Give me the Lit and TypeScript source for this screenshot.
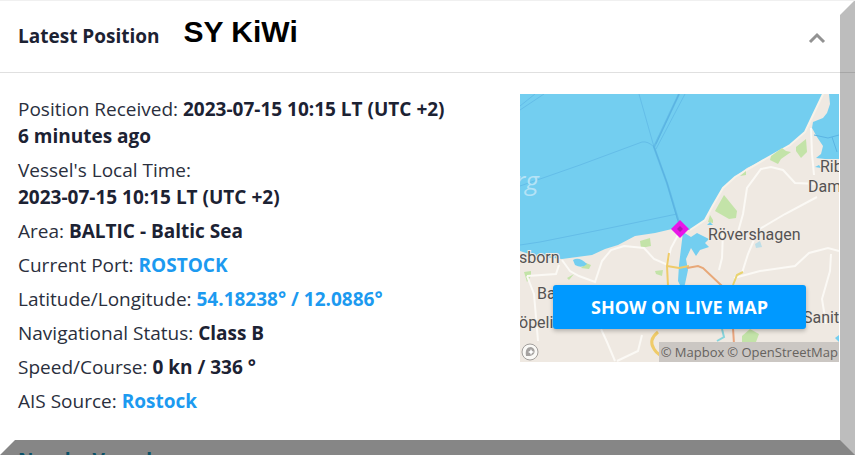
import { LitElement, html, css, nothing } from "lit";
import { customElement } from "lit/decorators.js";

interface Detail {
  label: string;
  value: string;
  link?: boolean;
  below?: boolean;
  note?: string;
}

const details: Detail[] = [
  { label: "Position Received:", value: "2023-07-15 10:15 LT (UTC +2)", note: "6 minutes ago" },
  { label: "Vessel's Local Time:", value: "2023-07-15 10:15 LT (UTC +2)", below: true },
  { label: "Area:", value: "BALTIC - Baltic Sea" },
  { label: "Current Port:", value: "ROSTOCK", link: true },
  { label: "Latitude/Longitude:", value: "54.18238° / 12.0886°", link: true },
  { label: "Navigational Status:", value: "Class B" },
  { label: "Speed/Course:", value: "0 kn / 336 °" },
  { label: "AIS Source:", value: "Rostock", link: true },
];

@customElement("position-map")
class PositionMap extends LitElement {
  static styles = css`
    :host {
      display: block;
      position: relative;
      overflow: hidden;
    }
    .map {
      display: block;
      width: 100%;
    }
    .place {
      font-family: "Roboto", sans-serif;
      font-size: 16px;
      fill: #555353;
      stroke: #f1ebe4;
      stroke-width: 2px;
      paint-order: stroke;
    }
    .sea-name {
      font-family: "Open Sans", sans-serif;
      font-style: italic;
      font-size: 26px;
      fill: #b5e3f6;
    }
    .show {
      position: absolute;
      left: 33px;
      right: 33px;
      bottom: 33px;
      height: 44px;
      padding: 0;
      border: 0;
      border-radius: 3px;
      background: #0099ff;
      color: #fff;
      font: 700 18px "Open Sans", sans-serif;
      box-shadow: 0 2px 4px rgba(0, 0, 0, 0.25);
    }
    .credit {
      position: absolute;
      right: 0;
      bottom: 0;
      display: flex;
      gap: 3px;
      padding: 0 1px 0 2px;
      background: #cbc7c3;
      font: 13px/20px "Open Sans", sans-serif;
      white-space: nowrap;
    }
    .credit a {
      color: #66635f;
      text-decoration: none;
    }
  `;

  render() {
    return html`
      <svg class="map" viewBox="0 0 319 268" role="img" aria-label="Map of the coast near Rostock">
        <rect width="319" height="268" fill="#73cef0" />
        <g fill="none" stroke="#64bde8" stroke-width="1">
          <path d="M0 92 L60 71 L122 48 Q128 47 134 53" />
          <path d="M119 0 L134 53 L147 89 L157 124 L160 132" />
          <path d="M0 12 L15 0 M0 16 L24 0" />
          <path d="M159 0 L136 50 M165 0 L136 55" />
          <path d="M157 120 L80 136 L20 148 L0 151" />
        </g>
        <path d="M159 0 L134 53 L147 89 L160 132" fill="none" stroke="#4fa7dc" stroke-width="2" opacity="0.5" />
        <path
          d="M0 157 L15 162 L42 165 L57 163 L72 161 L85 155 L98 151 L115 142 L135 139 L152 135 L170 136 L185 126 L192 113 L203 94 L215 83 L227 74 L247 64 L270 51 L285 38 L293 21 L299 9 L303 0 L309 0 L310 10 L307 19 L303 24 L293 28 L292 34 L297 43 L303 52 L301 60 L296 64 L305 65 L319 65 V268 H0 Z"
          fill="#efe9e2"
        />
        <path d="M170 136 L185 126 L192 113 L203 94 L215 83 L247 64 L270 51 L285 38 L293 21 L303 0" fill="none" stroke="#f7f2e9" stroke-width="2" />
        <g fill="#c3e3a8">
          <path d="M204 101 L217 117 L216 124 L209 125 L195 117 Z" />
          <path d="M190 121 L193 126 L193 129 L188 128 Z" />
          <path d="M251 62 L262 54 L266 57 L271 58 L261 65 L258 70 L250 66 Z" />
          <path d="M276 53 L286 45 L287 58 L281 64 L276 57 Z" />
          <path d="M220 82 L226 77 L226 81 Z" />
          <path d="M120 147 L130 144 L131 152 L121 154 Z" />
          <path d="M4 178 L11 177 L11 182 L7 188 Z" />
          <path d="M66 169 L71 171 L69 175 L61 174 Z" />
          <path d="M135 177 L143 176 L142 182 L136 180 Z" />
          <path d="M47 184 L54 180 L49 186 Z" />
          <path d="M222 242 L230 235 L239 240 L236 248 H222 Z" />
        </g>
        <g fill="#73cef0">
          <path d="M163 138 L171 143 L177 139 L189 145 L185 149 L189 153 L180 156 L176 162 L171 154 L166 165 L168 176 L165 190 L163 197 L158 187 L159 171 Z" />
          <path d="M53 166 Q59 162 67 170 Q62 175 55 171 Z" />
          <path d="M187 131 L190 128 L193 131 Z M295 73 L299 71 L301 74 Z" />
          <path d="M235 150 L240 147 L242 153 L236 154 Z" opacity="0.4" />
          <path d="M315 244 L319 241 V248 Z" />
        </g>
        <g fill="none" stroke="#fbf9f5" stroke-width="2">
          <path d="M42 166 L50 177 L59 182 L75 188 L82 167 L91 156 L104 152 L124 154 L134 165 L148 171" />
          <path d="M39 171 L36 180 L7 182 M7 182 L14 200 L18 247" />
          <path d="M81 235 L87 248 L95 267 M97 267 L118 257 L122 241" />
          <path d="M218 138 L223 120 L227 94 L241 75 L251 73 L263 76 L275 89 L300 90" />
          <path d="M291 34 L292 60 L294 81" />
          <path d="M297 103 L265 120 L238 136 L228 160 L222 179" />
          <path d="M203 138 L202 164 L199 176" />
          <path d="M214 184 L240 177 L275 172 L289 159 L308 154 L319 157 M311 160 L310 177 L302 205 L306 230" />
          <path d="M147 170 L151 154 L158 141" />
        </g>
        <g fill="none" stroke-width="2">
          <path d="M149 159 L147 172 L148 192 M147 172 L159 174 L169 172" stroke="#efcb69" />
          <path d="M138 238 Q128 246 134 255 Q138 262 148 264" stroke="#efcb69" stroke-width="3" />
          <path d="M167 174 L178 172 L183 174 L202 192" stroke="#e8a878" />
          <path d="M213 191 L217 181 L223 178" stroke="#e9d36f" />
          <path d="M213 234 L214 250 M205 267 L260 266" stroke="#e9a57d" />
          <path d="M202 235 L204 243 L197 247" stroke="#88d5dc" />
        </g>
        <path d="M294 41 L308 44 L319 41 M312 43 L317 58" fill="none" stroke="#5bb4e3" />
        <text class="sea-name" x="-5" y="96">rg</text>
        <text class="place" x="-1" y="169">sborn</text>
        <text class="place" x="17" y="205">Ba</text>
        <text class="place" x="-1" y="234">öpeli</text>
        <text class="place" x="188" y="146">Rövershagen</text>
        <text class="place" x="300" y="78">Rib</text>
        <text class="place" x="288" y="98">Dam</text>
        <text class="place" x="283" y="229">Sanit</text>
        <path d="M160 126 L169 135 L160 144 L151 135 Z" fill="#e815e8" />
        <path d="M160 132 L163 135 L160 138 L157 135 Z" fill="#a81ab0" />
        <g fill="none">
          <circle cx="10" cy="258" r="8" fill="#fff" fill-opacity="0.7" stroke="#a29f9c" />
          <path d="M6 262 C5 256 7 253 11 253 C16 254 16 261 10 262 Z" fill="#a5a2a0" />
          <path d="M11 255 L12 257 L14 258 L12 259 L11 261 L10 259 L8 258 L10 257 Z" fill="#fff" />
        </g>
      </svg>
      <div class="credit"><a href="#mapbox">© Mapbox</a><a href="#osm">© OpenStreetMap</a></div>
      <button class="show" type="button">SHOW ON LIVE MAP</button>
    `;
  }
}

@customElement("app-root")
class AppRoot extends LitElement {
  static styles = css`
    :host {
      display: block;
      position: relative;
      height: 100vh;
      overflow: hidden;
      box-sizing: border-box;
      border-top: 1px solid #f0f0f0;
      background: #fff;
      color: #1c2233;
      font: 19px/27px "Open Sans", sans-serif;
    }
    .head {
      display: flex;
      align-items: center;
      height: 71px;
      padding: 0 28px 0 18px;
      border-bottom: 1px solid #e0e0e0;
    }
    h2,
    h3 {
      margin: 0;
      font-size: 19px;
      font-weight: 700;
    }
    .vessel {
      flex: 1;
      margin-left: 24px;
      padding-bottom: 10px;
      color: #000;
      font: 700 30px/32px "Liberation Sans", sans-serif;
    }
    .toggle {
      display: flex;
      padding: 0;
      border: 0;
      background: none;
    }
    .body {
      display: flex;
      justify-content: space-between;
      align-items: flex-start;
      padding: 21px 16px 0 18px;
    }
    .details {
      display: flex;
      flex-direction: column;
      gap: 7px;
      margin: 0;
      padding-top: 2px;
    }
    .details dt,
    .details dd {
      display: inline;
      margin: 0;
    }
    .details dt {
      color: #2a2f3d;
    }
    .details dd {
      font-weight: 700;
    }
    .details .below {
      display: block;
    }
    a {
      color: #1c9af0;
      text-decoration: none;
    }
    position-map {
      flex: 0 0 319px;
    }
    .next {
      padding: 32px 18px 0;
    }
    .next h3 {
      color: #1498c4;
    }
    .bevel {
      position: absolute;
      inset: -1px 0 0;
      border: 15px solid transparent;
      border-right-color: rgba(0, 0, 0, 0.26);
      border-bottom-color: rgba(0, 0, 0, 0.47);
      pointer-events: none;
    }
  `;

  private renderDetail(d: Detail) {
    return html`<div>
      <dt>${d.label}</dt>
      <dd class=${d.below ? "below" : ""}>${d.link ? html`<a href="#details">${d.value}</a>` : d.value}</dd>
      ${d.note ? html`<dd class="below">${d.note}</dd>` : nothing}
    </div>`;
  }

  render() {
    return html`
      <header class="head">
        <h2>Latest Position</h2>
        <span class="vessel">SY KiWi</span>
        <button class="toggle" type="button" aria-label="Collapse">
          <svg width="20" height="14" viewBox="0 0 20 14" fill="none" stroke="#929292" stroke-width="3">
            <path d="M3 12 L10 5 L17 12" />
          </svg>
        </button>
      </header>
      <main class="body">
        <dl class="details">${details.map((d) => this.renderDetail(d))}</dl>
        <position-map></position-map>
      </main>
      <section class="next"><h3>Nearby Vessels</h3></section>
      <div class="bevel"></div>
    `;
  }
}
